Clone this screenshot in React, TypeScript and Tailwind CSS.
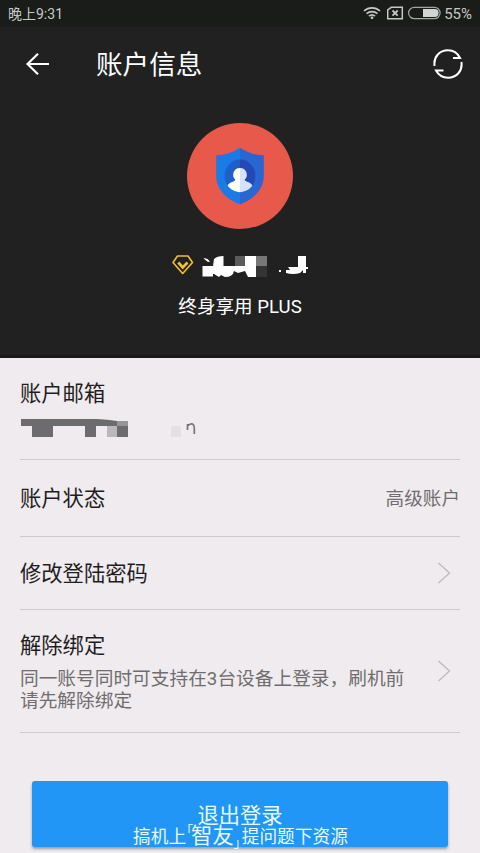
import type { ReactNode } from "react";

function StatusBar()
{
	return (
		<div className="flex h-[27px] items-center bg-[#191c19] pl-2 pr-2 text-[#c6c8c6]">
			<span className="pt-px text-[14px] leading-[26px]">晚上9:31</span>
			<div className="ml-auto flex items-center">
				<svg className="-mt-px h-[14px] w-[18px]" viewBox="0 0 18 14" fill="none" stroke="currentColor" strokeWidth="1.7">
					<path d="M1 5C5.5 .8 12.500 .8 17 5" />
					<path d="M3.600 7.700C6.600 4.900 11.400 4.900 14.400 7.700" />
					<path d="M6 10.100C7.800 8.500 10.200 8.500 12 10.100" />
					<circle cx="9" cy="11.800" r="1.400" fill="currentColor" stroke="none" />
				</svg>
				<svg className="ml-[6px] -mt-px h-[14px] w-[18px]" viewBox="0 0 18 14" fill="none" stroke="currentColor" strokeWidth="1.500">
					<path d="M4.300 1.300H15.300V12.700H.700V4Z" />
					<path d="M5.500 4.500L10.700 9.700M10.700 4.500L5.500 9.700" strokeWidth="1.800" />
				</svg>
				<svg className="ml-[2px] -mt-px h-[14px] w-[35px]" viewBox="0 0 35 14" fill="none">
					<rect x="1.600" y="1.300" width="31.500" height="11.400" rx="5.700" stroke="#a3a5a3" strokeWidth="1.200" />
					<path d="M16 3H27.600A4 4 0 0 1 27.600 11H16Z" fill="#d2d4d2" />
				</svg>
				<span className="ml-[2px] pt-px text-[15px] leading-[26px]">55%</span>
			</div>
		</div>
	);
}

function Avatar()
{
	return (
		<svg className="h-[106px] w-[106px]" viewBox="0 0 107 107">
			<circle cx="53.500" cy="53.500" r="53.500" fill="#e7594b" />
			<path d="M53.500 25C46 30 38 32.500 29.500 32.500V54C29.500 67 41 78 53.500 82Z" fill="#1a7be6" />
			<path d="M53.500 25C61 30 69 32.500 77.500 32.500V54C77.500 67 66 78 53.500 82Z" fill="#2866d2" />
			<path d="M53.500 36.500A16.800 16.800 0 0 0 53.500 70Z" fill="#1f5fc8" />
			<path d="M53.500 36.500A16.800 16.800 0 0 1 53.500 70Z" fill="#2449b4" />
			<path d="M53.500 45.500A6.800 6.800 0 0 0 48.800 57.300C48.500 59.500 43 59 41 63.200C44 67.500 48.500 69.800 53.500 69.800Z" fill="#ffffff" />
			<path d="M53.500 45.500A6.800 6.800 0 0 1 58.200 57.300C58.500 59.500 64 59 66 63.200C63 67.500 58.500 69.800 53.500 69.800Z" fill="#d6e2f8" />
		</svg>
	);
}

function Chevron()
{
	return (
		<svg className="mr-[9px] h-[22px] w-[14px] shrink-0" viewBox="0 0 14 22" fill="none" stroke="#bdb9bd" strokeWidth="1.300">
			<path d="M1.500 1L12.500 11L1.500 21" />
		</svg>
	);
}

function Row({ className, children }: { className: string; children: ReactNode })
{
	return (
		<div className={"mx-5 flex items-center justify-between border-b border-[#cdcacd] " + className}>
			{children}
		</div>
	);
}

function App()
{
	return (
		<div className="flex h-[853px] w-[480px] flex-col overflow-hidden bg-[#efebee] font-['Roboto','Noto_Sans_CJK_SC',sans-serif]">
			<StatusBar />
			<div className="flex h-[331px] flex-col border-b-[3px] border-[#191a19] bg-[#212121] text-white">
				<div className="flex h-[74px] items-center pl-[26px] pr-[17px]">
					<svg className="h-6 w-6" viewBox="0 0 24 24" fill="none" stroke="currentColor" strokeWidth="2.200">
						<path d="M23 12H1.500M12 1.800L1.500 12L12 22.200" />
					</svg>
					<h1 className="ml-[46px] pt-[2px] text-[26.600px] leading-[36px]">账户信息</h1>
					<svg className="ml-auto h-[30px] w-[30px]" viewBox="0 0 30 30" fill="none" stroke="currentColor" strokeWidth="2">
						<path d="M1.600 17C.2 8 6.500 1.300 15 1.300C20 1.300 24.500 4 27 9H20" />
						<path d="M28.400 13C29.800 22 23.500 28.700 15 28.700C10 28.700 5.500 26 3 21.500H10.500" />
					</svg>
				</div>
				<div className="mt-[22px] flex flex-col items-center">
					<Avatar />
					<div className="mt-[24px] flex h-[24px] items-start self-start pl-[172px]">
						<svg className="mt-[2px] h-[20px] w-[22px]" viewBox="0 0 22 20" fill="none" stroke="#f0c030" strokeWidth="1.600">
							<path d="M5.500 1H16L20.500 7.500L10.700 18.500L1 7.500Z" strokeLinejoin="round" />
							<path d="M6.300 7.500L10.700 12.500L15.500 7.500" strokeWidth="2.700" />
						</svg>
						{/* masked account name */}
						<svg className="ml-[8px] h-[24px] w-[108px]" viewBox="202 253 108 24">
							<path d="M203.500 258.500Q207 257.500 210 261.500L208 262Z" fill="#fff" />
							<path d="M214 259Q217 256 223.500 256V266H245V256H256V277H248L245 271L238 273L234 271Q233 277 225 277L221 275L219 277L214 274H213V276.500H202.500V266H213Z" fill="#fff" />
							<path d="M235 256H245V266H235Z" fill="#5b5b5b" />
							<path d="M256 256H267V266H256Z" fill="#777" />
							<path d="M256 266H267V277H256Z" fill="#343434" />
							<path d="M279 270H281V272H279Z" fill="#fff" />
							<path d="M298 256H306V267H308V269H306V273H303V270L300 273Q293 275 286 273V270H290L288 267H298Z" fill="#fff" />
						</svg>
					</div>
					<p className="mt-[17px] text-[18.600px] leading-[26px]">终身享用 PLUS</p>
				</div>
			</div>

			<Row className="h-[102px]">
				<div>
					<p className="relative top-px text-[21.300px] leading-[28px] text-[#1f1d1f]">账户邮箱</p>
					{/* masked e-mail address */}
					<svg className="mt-[10px] h-[22px] w-[180px]" viewBox="20 417 180 22">
						<path d="M21 419H97Q108 419.500 117 421H128V426H21Z" fill="#6b6c6b" />
						<path d="M32 426H53V437H32ZM85 426H96V437H85ZM117 426H128V437H117Z" fill="#6d6b6d" />
						<path d="M107 426H117V437H107Z" fill="#bbb8bb" />
						<path d="M117 421H128V426H117Z" fill="#969696" />
						<path d="M171 426H181V437H171Z" fill="#e4e1e4" />
						<path d="M187.500 424V430M188 425.500C192 422.500 194.300 424 194.300 428V434" fill="none" stroke="#777477" strokeWidth="1.700" />
					</svg>
				</div>
			</Row>
			<Row className="h-[77px] pt-[2px]">
				<p className="text-[21.300px] leading-[28px] text-[#1f1d1f]">账户状态</p>
				<p className="text-[18.600px] leading-[26px] text-[#6f6d6f]">高级账户</p>
			</Row>
			<Row className="h-[73px]">
				<p className="pt-[2px] text-[21.300px] leading-[28px] text-[#1f1d1f]">修改登陆密码</p>
				<Chevron />
			</Row>
			<Row className="h-[123px]">
				<div className="pt-px">
					<p className="text-[21.300px] leading-[28px] text-[#1f1d1f]">解除绑定</p>
					<p className="mt-[8px] whitespace-nowrap text-[18.700px] leading-[22px] text-[#6f6d6f]">
						同一账号同时可支持在3台设备上登录，刷机前<br />请先解除绑定
					</p>
				</div>
				<Chevron />
			</Row>

			<button className="relative mx-8 mt-[48px] flex h-[66px] shrink-0 justify-center rounded-[3px] bg-[#2196f6] pt-[21px] text-[#e6fbff] shadow-[0_2px_3px_rgba(0,0,0,0.35)]">
				<span className="text-[21.300px] leading-[28px]">退出登录</span>
				<span className="absolute left-[101px] top-[44px] flex items-center whitespace-nowrap text-[17.700px] leading-[24px]">
					搞机上
					<span className="-mt-[14px] ml-[-6px] w-[11px] text-[13px] leading-[13px]">「</span>
					<span className="-mt-[3px] text-[21.300px]">智友</span>
					<span className="mt-[10px] w-[8px] text-[13px] leading-[13px]">」</span>
					提问题下资源
				</span>
			</button>
		</div>
	);
}

export default App;
